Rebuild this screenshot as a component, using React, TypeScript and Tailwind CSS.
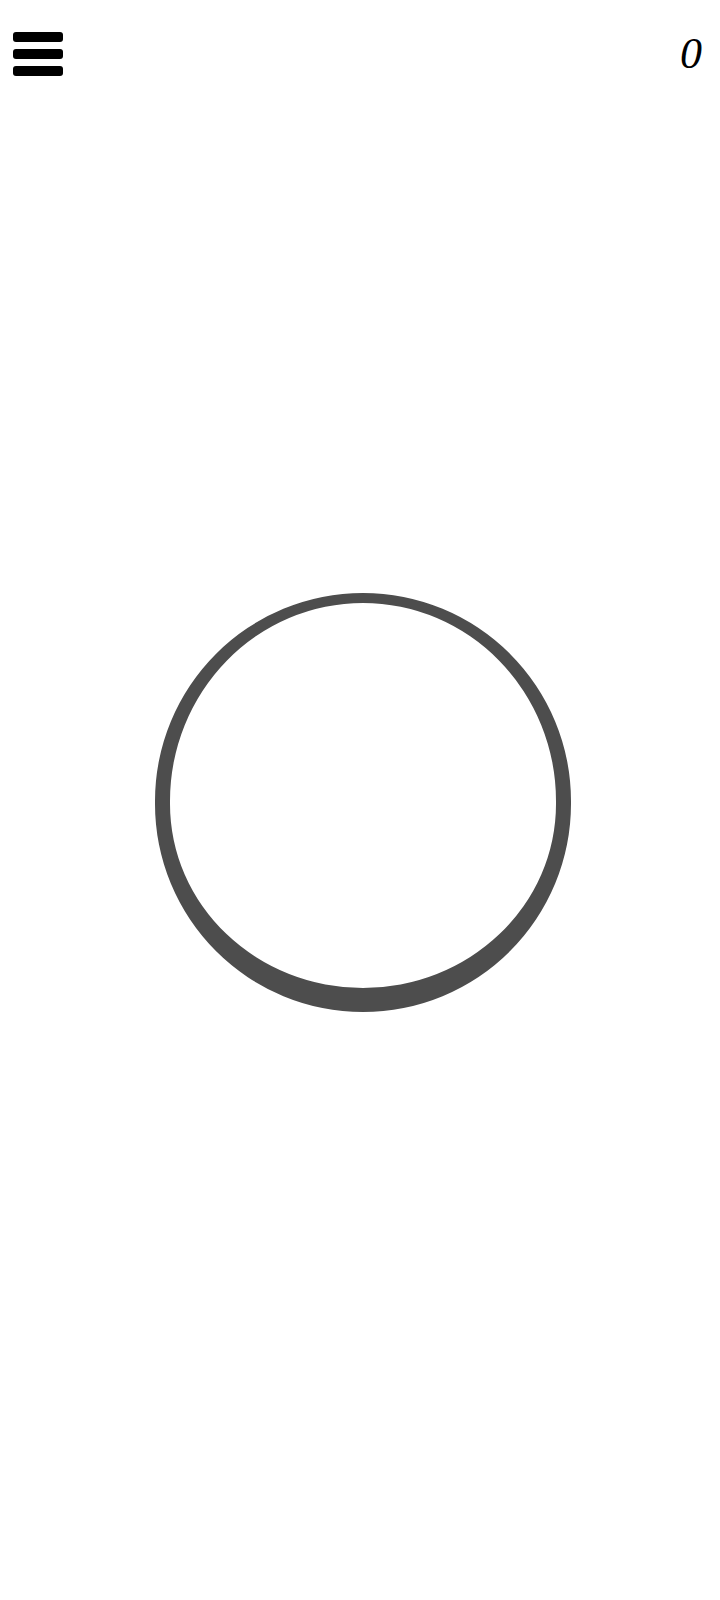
import React from "react";

const MenuIcon = () => (
  <div className="flex flex-col gap-[7px] w-[50px]">
    <div className="h-[10px] rounded-[3px] bg-black"></div>
    <div className="h-[10px] rounded-[3px] bg-black"></div>
    <div className="h-[10px] rounded-[3px] bg-black"></div>
  </div>
);

const App: React.FC = () => {
  const [count, setCount] = React.useState(0);

  return (
    <div className="w-[720px] h-[1600px] bg-white flex flex-col">
      <div className="h-[100px] flex justify-between items-start pl-[13px] pr-[18px]">
        <button className="mt-[32px]">
          <MenuIcon />
        </button>
        <p
          className="mt-[28px] text-[44px] leading-[52px] italic text-black"
          style={{ fontFamily: '"Liberation Serif", serif' }}
        >
          {count}
        </p>
      </div>

      <div className="flex justify-center pl-[6px] pt-[493px]">
        <button
          onClick={() => setCount(count + 1)}
          className="w-[416px] h-[419px] rounded-full bg-white border-solid border-[#4d4d4d] border-t-[10px] border-x-[15px] border-b-[24px]"
        ></button>
      </div>
    </div>
  );
};

export default App;
